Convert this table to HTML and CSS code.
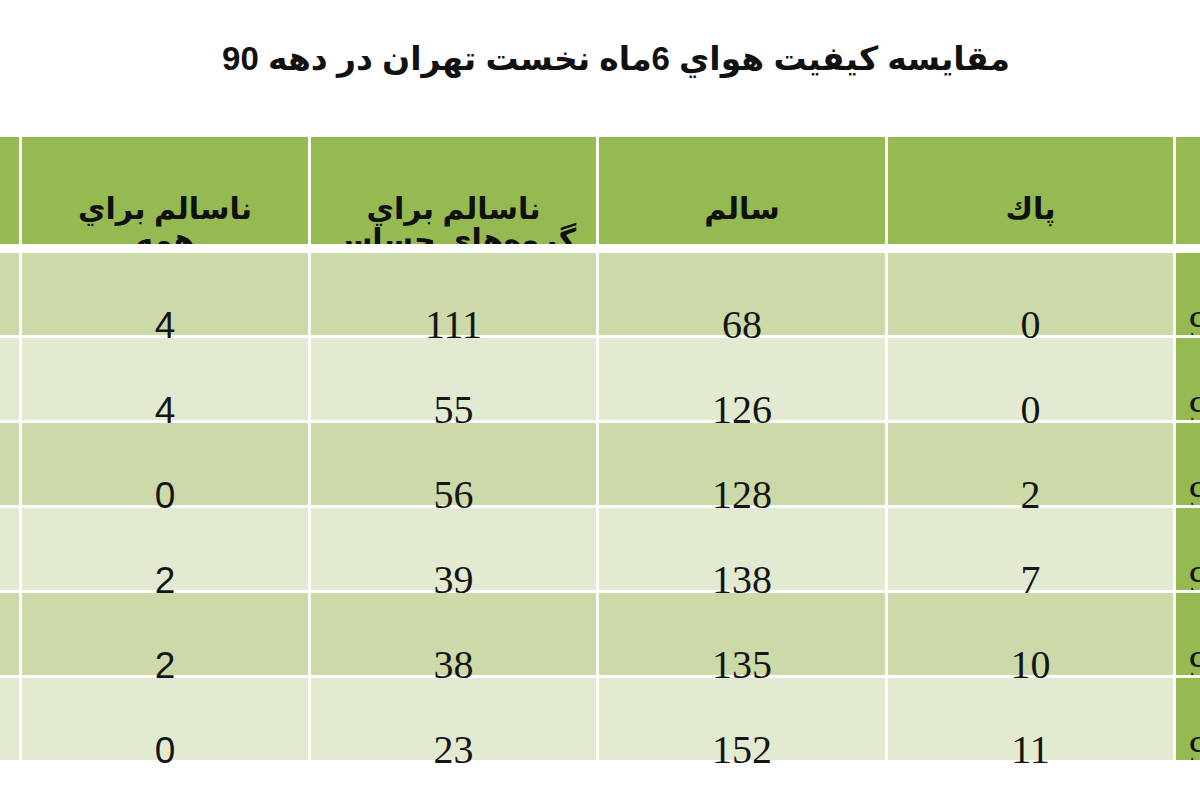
FILE: index.html
```html
<!DOCTYPE html>
<html lang="fa">
<head>
<meta charset="utf-8">
<title>مقایسه کیفیت هوای 6ماه نخست تهران در دهه 90</title>
<link rel="stylesheet" href="styles.css">
</head>
<body>
<div class="page">
  <h1 class="title" dir="rtl">مقايسه كيفيت هواي 6ماه نخست تهران در دهه 90</h1>
  <div class="table">
    <div class="grid head">
      <div class="cell h edge"></div>
      <div class="cell h"><span class="ht">ناسالم براي<br>همه</span></div>
      <div class="cell h"><span class="ht">ناسالم براي<br>گروه‌هاي حساس</span></div>
      <div class="cell h"><span class="ht">سالم</span></div>
      <div class="cell h"><span class="ht">پاك</span></div>
      <div class="cell h year"></div>
    </div>
    <div class="grid body">
      <div class="cell d1 edge"></div>
      <div class="cell d1 sans">4</div>
      <div class="cell d1">111</div>
      <div class="cell d1">68</div>
      <div class="cell d1">0</div>
      <div class="cell yr">90</div>

      <div class="cell d2 edge"></div>
      <div class="cell d2 sans">4</div>
      <div class="cell d2">55</div>
      <div class="cell d2">126</div>
      <div class="cell d2">0</div>
      <div class="cell yr">91</div>

      <div class="cell d1 edge"></div>
      <div class="cell d1 sans">0</div>
      <div class="cell d1">56</div>
      <div class="cell d1">128</div>
      <div class="cell d1">2</div>
      <div class="cell yr">92</div>

      <div class="cell d2 edge"></div>
      <div class="cell d2 sans">2</div>
      <div class="cell d2">39</div>
      <div class="cell d2">138</div>
      <div class="cell d2">7</div>
      <div class="cell yr">93</div>

      <div class="cell d1 edge"></div>
      <div class="cell d1 sans">2</div>
      <div class="cell d1">38</div>
      <div class="cell d1">135</div>
      <div class="cell d1">10</div>
      <div class="cell yr">94</div>

      <div class="cell d2 edge"></div>
      <div class="cell d2 sans">0</div>
      <div class="cell d2">23</div>
      <div class="cell d2">152</div>
      <div class="cell d2">11</div>
      <div class="cell yr">95</div>
    </div>
  </div>
</div>
</body>
</html>
```
FILE: styles.css
```css
html, body {
  margin: 0;
  padding: 0;
  background: #ffffff;
}
.page {
  width: 1200px;
  height: 800px;
  overflow: hidden;
  background: #ffffff;
}
.title {
  margin: 0;
  height: 137px;
  box-sizing: border-box;
  padding-top: 39px;
  padding-left: 32px;
  text-align: center;
  font-family: "Liberation Sans", "DejaVu Sans", sans-serif;
  font-weight: bold;
  font-size: 33px;
  line-height: 40px;
  color: #111111;
}
.table {
  width: 1200px;
}
.grid {
  display: grid;
  grid-template-columns: 19px 286px 285px 286px 285px 25px;
  column-gap: 3px;
}
.head {
  height: 107px;
}
.body {
  margin-top: 9px;
  grid-auto-rows: 82px;
  row-gap: 3px;
}
.cell {
  text-align: center;
  font-family: "Liberation Serif", "DejaVu Serif", serif;
  font-size: 40px;
  line-height: 40px;
  color: #151515;
  box-sizing: border-box;
  padding-top: 52px;
  white-space: nowrap;
}
.cell.sans {
  font-family: "Liberation Sans", "DejaVu Sans", sans-serif;
  font-size: 37px;
  padding-top: 53px;
}
.h {
  background: #95ba52;
  overflow: hidden;
  padding-top: 56px;
}
.ht {
  display: block;
  font-family: "Liberation Sans", "DejaVu Sans", sans-serif;
  font-weight: bold;
  font-size: 30px;
  line-height: 31px;
  direction: rtl;
  color: #101010;
}
.d1 {
  background: #cbdaa8;
}
.d2 {
  background: #e2ebd1;
}
.yr {
  background: #95ba52;
  text-align: left;
  padding-left: 13px;
  overflow: hidden;
}
.edge {
  overflow: hidden;
}
```
